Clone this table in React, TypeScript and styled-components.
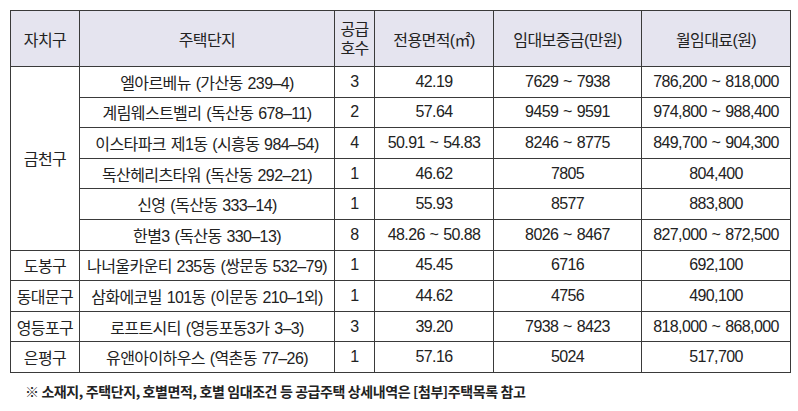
import { createGlobalStyle, styled } from 'styled-components'

const GlobalStyle = createGlobalStyle`
    html, body {
        margin: 0;
        padding: 0;
        background: #ffffff;
    }
    body {
        font-family: "Liberation Sans", "Noto Sans CJK KR", sans-serif;
        color: #222222;
    }
`

const Page = styled.div`
    width: 798px;
    height: 411px;
    padding: 10px 0 0 10px;
    box-sizing: border-box;
    display: flex;
    flex-direction: column;
`

const Table = styled.table`
    width: 780px;
    border-collapse: collapse;
    table-layout: fixed;
    font-size: 16px;
`

const Head = styled.th<{ $tight?: boolean }>`
    height: 55px;
    padding: 0;
    background: #e5e4ef;
    border: 1px solid #3a3a3a;
    font-weight: 400;
    font-size: 16px;
    letter-spacing: -0.6px;
    line-height: ${(p) => (p.$tight ? '19px' : 'normal')};
    text-align: center;
`

const Row = styled.tr`
    height: 30.6px;
`

const Cell = styled.td`
    padding: 0;
    border: 1px solid #3a3a3a;
    text-align: center;
    white-space: nowrap;
    letter-spacing: -0.6px;
    word-spacing: 1px;
`

const Note = styled.div`
    margin: 8px 0 0 15px;
    font-family: "Noto Sans CJK KR", sans-serif;
    font-weight: 700;
    font-size: 14px;
    letter-spacing: -0.4px;
    color: #222222;
`

type Item = {
    gu?: string
    span?: number
    name: string
    units: string
    area: string
    deposit: string
    rent: string
}

const items: Item[] = [
    { gu: '금천구', span: 6, name: '엘아르베뉴 (가산동 239–4)', units: '3', area: '42.19', deposit: '7629 ~ 7938', rent: '786,200 ~ 818,000' },
    { name: '계림웨스트벨리 (독산동 678–11)', units: '2', area: '57.64', deposit: '9459 ~ 9591', rent: '974,800 ~ 988,400' },
    { name: '이스타파크 제1동 (시흥동 984–54)', units: '4', area: '50.91 ~ 54.83', deposit: '8246 ~ 8775', rent: '849,700 ~ 904,300' },
    { name: '독산헤리츠타워 (독산동 292–21)', units: '1', area: '46.62', deposit: '7805', rent: '804,400' },
    { name: '신영 (독산동 333–14)', units: '1', area: '55.93', deposit: '8577', rent: '883,800' },
    { name: '한별3 (독산동 330–13)', units: '8', area: '48.26 ~ 50.88', deposit: '8026 ~ 8467', rent: '827,000 ~ 872,500' },
    { gu: '도봉구', name: '나너울카운티 235동 (쌍문동 532–79)', units: '1', area: '45.45', deposit: '6716', rent: '692,100' },
    { gu: '동대문구', name: '삼화에코빌 101동 (이문동 210–1외)', units: '1', area: '44.62', deposit: '4756', rent: '490,100' },
    { gu: '영등포구', name: '로프트시티 (영등포동3가 3–3)', units: '3', area: '39.20', deposit: '7938 ~ 8423', rent: '818,000 ~ 868,000' },
    { gu: '은평구', name: '유앤아이하우스 (역촌동 77–26)', units: '1', area: '57.16', deposit: '5024', rent: '517,700' },
]

export default function App() {
    return (
        <Page>
            <GlobalStyle />
            <Table>
                <colgroup>
                    <col style={{ width: 69 }} />
                    <col style={{ width: 255 }} />
                    <col style={{ width: 40 }} />
                    <col style={{ width: 119 }} />
                    <col style={{ width: 148 }} />
                    <col style={{ width: 149 }} />
                </colgroup>
                <thead>
                    <tr>
                        <Head>자치구</Head>
                        <Head>주택단지</Head>
                        <Head $tight>
                            공급
                            <br />
                            호수
                        </Head>
                        <Head>전용면적(㎡)</Head>
                        <Head>임대보증금(만원)</Head>
                        <Head>월임대료(원)</Head>
                    </tr>
                </thead>
                <tbody>
                    {items.map((it) => (
                        <Row key={it.name}>
                            {it.gu && <Cell rowSpan={it.span ?? 1}>{it.gu}</Cell>}
                            <Cell>{it.name}</Cell>
                            <Cell>{it.units}</Cell>
                            <Cell>{it.area}</Cell>
                            <Cell>{it.deposit}</Cell>
                            <Cell>{it.rent}</Cell>
                        </Row>
                    ))}
                </tbody>
            </Table>
            <Note>※ 소재지, 주택단지, 호별면적, 호별 임대조건 등 공급주택 상세내역은 [첨부]주택목록 참고</Note>
        </Page>
    )
}
